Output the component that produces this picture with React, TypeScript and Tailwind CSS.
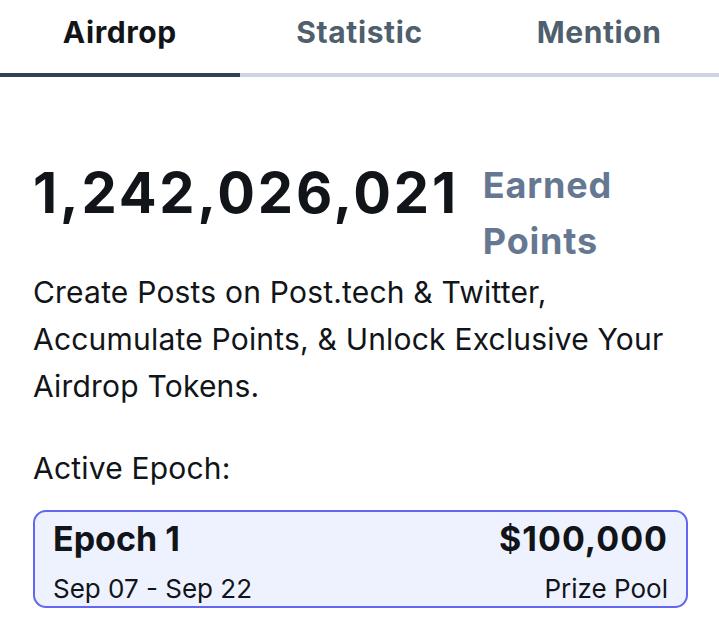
import { useState } from "react";

const tabs = ["Airdrop", "Statistic", "Mention"];

export default function App() {
  const [active, setActive] = useState(0);

  return (
    <div className="min-h-screen w-full bg-white text-[#111418] font-['Inter',sans-serif]">
      {/* tabs */}
      <div className="flex w-full">
        {tabs.map((t, i) => (
          <button
            key={t}
            onClick={() => setActive(i)}
            className={
              i === active
                ? "flex-1 h-[77px] border-b-4 border-[#334155] pb-[9px] text-[30px] font-bold tracking-[0.6px] text-[#111418]"
                : "flex-1 h-[77px] border-b-4 border-[#cbd5e1] pb-[9px] text-[30px] font-bold tracking-[0.6px] text-[#4f5f6d]"
            }
          >
            {t}
          </button>
        ))}
      </div>

      <div className="px-[33px] pr-[31px] pt-[80px]">
        <div className="flex items-start gap-[24px]">
          <div className="text-[56px] font-bold leading-[72px] tracking-[2.8px]">
            1,242,026,021
          </div>
          <div className="text-[36px] font-bold leading-[56px] tracking-[0.8px] text-[#667891]">
            Earned
            <br />
            Points
          </div>
        </div>

        <p className="text-[30px] leading-[47px] tracking-[0.2px]">
          Create Posts on Post.tech &amp; Twitter, Accumulate Points, &amp; Unlock
          Exclusive Your Airdrop Tokens.
        </p>

        <p className="mt-[35px] text-[30px] leading-[47px] tracking-[0.2px]">
          Active Epoch:
        </p>

        <div className="mt-[18px] rounded-[13px] border-[2.5px] border-[#6366f1] bg-[#eef2fe] px-[18px] pt-[7px]">
          <div className="flex items-center justify-between text-[34px] font-bold leading-[40px]">
            <span>Epoch 1</span>
            <span className="tracking-[1px]">$100,000</span>
          </div>
          <div className="mt-[13px] flex items-center justify-between text-[26px] leading-[34px]">
            <span>Sep 07 - Sep 22</span>
            <span>Prize Pool</span>
          </div>
        </div>
      </div>
    </div>
  );
}
